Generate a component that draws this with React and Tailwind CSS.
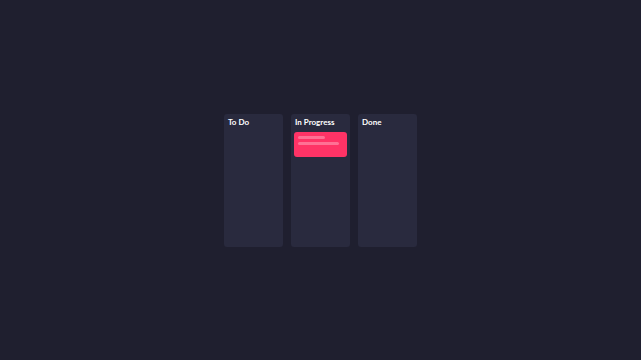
const columns = [
  { title: "To Do", cards: [] },
  { title: "In Progress", cards: [{ id: 1 }] },
  { title: "Done", cards: [] },
];

const App = () => {
  return (
    <div className="flex h-[360px] w-full items-center justify-center bg-[#1f1f2f] font-['Lato',sans-serif]">
      <div className="flex gap-[8px]">
        {columns.map((column) => (
          <div
            key={column.title}
            className="flex h-[133px] w-[59px] flex-col rounded-[3px] bg-[#292a3e] px-[3px] pt-[3px]"
          >
            <h2 className="px-[1px] text-[8px] font-bold leading-[10px] text-white">
              {column.title}
            </h2>
            <div className="mt-[5px] flex flex-col gap-[3px]">
              {column.cards.map((card) => (
                <div
                  key={card.id}
                  className="flex h-[25px] flex-col gap-[3px] rounded-[3px] bg-[#ff3366] px-[4px] pt-[4px]"
                >
                  <div className="h-[3px] w-[27px] rounded-full bg-white/30" />
                  <div className="h-[3px] w-[41px] rounded-full bg-white/30" />
                </div>
              ))}
            </div>
          </div>
        ))}
      </div>
    </div>
  );
};

export default App;
